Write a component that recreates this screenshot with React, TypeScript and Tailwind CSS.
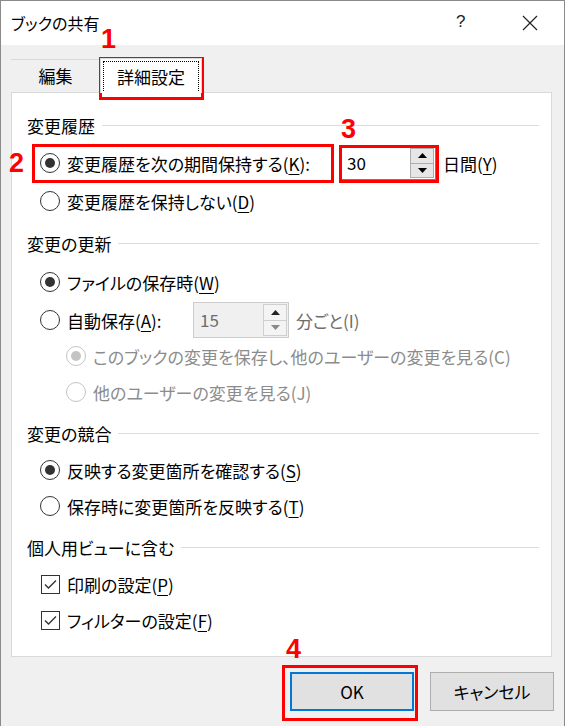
import React from "react";

const Radio = ({ checked = false, disabled = false }: { checked?: boolean; disabled?: boolean }) => (
  <span
    className={`w-[20px] h-[20px] shrink-0 rounded-full border bg-white flex items-center justify-center ${
      disabled ? "border-[#c4c4c4]" : "border-[#333333]"
    }`}
  >
    {checked && (
      <span className={`w-[10px] h-[10px] rounded-full ${disabled ? "bg-[#c4c4c4]" : "bg-[#333333]"}`} />
    )}
  </span>
);

const Check = () => (
  <span className="w-[19px] h-[19px] shrink-0 border border-[#333333] bg-white flex items-center justify-center">
    <svg width="13" height="11" viewBox="0 0 13 11">
      <polyline points="1,5.5 4.5,9 12,1.5" fill="none" stroke="#333333" strokeWidth="1.4" />
    </svg>
  </span>
);

const U = ({ children }: { children: React.ReactNode }) => (
  <span className="underline underline-offset-[3px] decoration-1">{children}</span>
);

const Header = ({ text, mt }: { text: string; mt: string }) => (
  <div className={`flex items-center h-[26px] pl-[15px] pr-[12px] ${mt}`}>
    <span className="leading-none">{text}</span>
    <span className="flex-1 h-px bg-[#dcdcdc] ml-[7px]" />
  </div>
);

const Spin = ({ value, disabled = false, h }: { value: string; disabled?: boolean; h: string }) => (
  <div
    className={`w-[96px] ${h} shrink-0 border flex items-stretch ${
      disabled ? "border-[#cccccc] bg-[#f0f0f0]" : "border-[#7a7a7a] bg-white"
    }`}
  >
    <span className={`flex-1 flex items-center pl-[6px] ${disabled ? "text-[#6d6d6d]" : "text-black"}`}>
      {value}
    </span>
    <div className="w-[25px] flex flex-col py-[1px] pr-[1px]">
      <div
        className={`flex-1 flex items-center justify-center border ${
          disabled ? "border-[#cfcfcf] bg-[#f4f4f4]" : "border-[#adadad] bg-[#e6e6e6]"
        }`}
      >
        <svg width="9" height="5" viewBox="0 0 9 5">
          <polygon points="0,5 9,5 4.5,0" fill={disabled ? "#222222" : "#000000"} />
        </svg>
      </div>
      <div
        className={`flex-1 flex items-center justify-center border border-t-0 ${
          disabled ? "border-[#cfcfcf] bg-[#f4f4f4]" : "border-[#adadad] bg-[#e6e6e6]"
        }`}
      >
        <svg width="9" height="5" viewBox="0 0 9 5">
          <polygon points="0,0 9,0 4.5,5" fill={disabled ? "#8a8a8a" : "#000000"} />
        </svg>
      </div>
    </div>
  </div>
);

const RedBox = ({ cls }: { cls: string }) => (
  <div className={`absolute border-[3px] border-[#ff0000] pointer-events-none ${cls}`} />
);

const RedNum = ({ n, cls }: { n: string; cls: string }) => (
  <div
    className={`absolute font-['Liberation_Sans',Arial,sans-serif] font-bold text-[27px] leading-none text-[#ff0000] ${cls}`}
  >
    {n}
  </div>
);

export default function App() {
  return (
    <div className="relative w-[565px] h-[726px] bg-[#f0f0f0] border-l border-r border-t border-[#8a8a8a] overflow-hidden font-['Noto_Sans_CJK_JP','Noto_Sans',sans-serif] [font-feature-settings:'palt'] text-[17px] text-black">
      {/* title bar */}
      <div className="h-[44px] bg-white flex items-center relative">
        <span className="ml-[10px] text-[16px] leading-none">ブックの共有</span>
        <span className="absolute left-[455px] top-[12px] text-[17px] leading-none font-['Liberation_Sans',sans-serif] text-[#222]">
          ?
        </span>
        <svg className="absolute left-[521px] top-[14px]" width="16" height="16" viewBox="0 0 16 16">
          <path d="M1 1 L15 15 M15 1 L1 15" stroke="#222" strokeWidth="1.2" />
        </svg>
      </div>

      {/* tabs */}
      <div className="h-[47px] flex items-end pl-[10px]">
        <div className="w-[89px] h-[33px] border-t border-[#d9d9d9] flex items-center justify-center pb-[2px]">
          <span className="leading-none text-[17px]">編集</span>
        </div>
        <div className="w-[102px] h-[35px] bg-white border border-b-0 border-[#d9d9d9] flex p-[2px] -mb-px relative z-10">
          <div className="flex-1 border border-dotted border-black border-b-0 flex items-center justify-center">
            <span className="leading-none text-[17px]">詳細設定</span>
          </div>
        </div>
      </div>

      {/* panel */}
      <div className="mx-[10px] w-[541px] h-[565px] bg-white border border-[#d9d9d9] flex flex-col pt-[19px]">
        <Header text="変更履歴" mt="mt-0" />
        <div className="flex items-center h-[36px] pl-[28px] mt-[7px]">
          <Radio checked />
          <span className="ml-[7px] w-[273px] leading-none">
            変更履歴を次の期間保持する(<U>K</U>):
          </span>
          <Spin value="30" h="h-[34px]" />
          <span className="ml-[7px] leading-none">
            日間(<U>Y</U>)
          </span>
        </div>
        <div className="flex items-center h-[36px] pl-[28px] mt-[2px]">
          <Radio />
          <span className="ml-[7px] leading-none">
            変更履歴を保持しない(<U>D</U>)
          </span>
        </div>

        <Header text="変更の更新" mt="mt-[11px]" />
        <div className="flex items-center h-[36px] pl-[28px] mt-[8px]">
          <Radio checked />
          <span className="ml-[7px] leading-none">
            ファイルの保存時(<U>W</U>)
          </span>
        </div>
        <div className="flex items-center h-[36px] pl-[28px] mt-[2px]">
          <Radio />
          <span className="ml-[7px] w-[126px] leading-none">
            自動保存(<U>A</U>):
          </span>
          <Spin value="15" disabled h="h-[36px]" />
          <span className="ml-[7px] leading-none text-[#6d6d6d]">分ごと(I)</span>
        </div>
        <div className="flex items-center h-[36px] pl-[54px]">
          <Radio checked disabled />
          <span className="ml-[7px] leading-none text-[#8c8c8c]">
            このブックの変更を保存し、他のユーザーの変更を見る(C)
          </span>
        </div>
        <div className="flex items-center h-[36px] pl-[54px]">
          <Radio disabled />
          <span className="ml-[7px] leading-none text-[#8c8c8c]">他のユーザーの変更を見る(J)</span>
        </div>

        <Header text="変更の競合" mt="mt-[10px]" />
        <div className="flex items-center h-[36px] pl-[28px] mt-[6px]">
          <Radio checked />
          <span className="ml-[7px] leading-none">
            反映する変更箇所を確認する(<U>S</U>)
          </span>
        </div>
        <div className="flex items-center h-[36px] pl-[28px]">
          <Radio />
          <span className="ml-[7px] leading-none">
            保存時に変更箇所を反映する(<U>T</U>)
          </span>
        </div>

        <Header text="個人用ビューに含む" mt="mt-[10px]" />
        <div className="flex items-center h-[36px] pl-[29px] mt-[6px]">
          <Check />
          <span className="ml-[7px] leading-none">
            印刷の設定(<U>P</U>)
          </span>
        </div>
        <div className="flex items-center h-[36px] pl-[29px]">
          <Check />
          <span className="ml-[7px] leading-none">
            フィルターの設定(<U>F</U>)
          </span>
        </div>
      </div>

      {/* buttons */}
      <div className="flex justify-end gap-[16px] pr-[10px] pt-[15px]">
        <button className="w-[124px] h-[39px] bg-[#e1e1e1] border-2 border-[#0078d7] flex items-center justify-center leading-none">
          OK
        </button>
        <button className="w-[124px] h-[39px] bg-[#e1e1e1] border border-[#adadad] flex items-center justify-center leading-none">
          キャンセル
        </button>
      </div>

      {/* annotations */}
      <RedBox cls="left-[98px] top-[56px] w-[105px] h-[43px]" />
      <RedNum n="1" cls="left-[100px] top-[25px]" />
      <RedBox cls="left-[31px] top-[143px] w-[302px] h-[39px]" />
      <RedNum n="2" cls="left-[8px] top-[149px]" />
      <RedBox cls="left-[338px] top-[144px] w-[100px] h-[38px]" />
      <RedNum n="3" cls="left-[340px] top-[115px]" />
      <RedBox cls="left-[281px] top-[664px] w-[136px] h-[56px]" />
      <RedNum n="4" cls="left-[285px] top-[635px]" />
    </div>
  );
}
